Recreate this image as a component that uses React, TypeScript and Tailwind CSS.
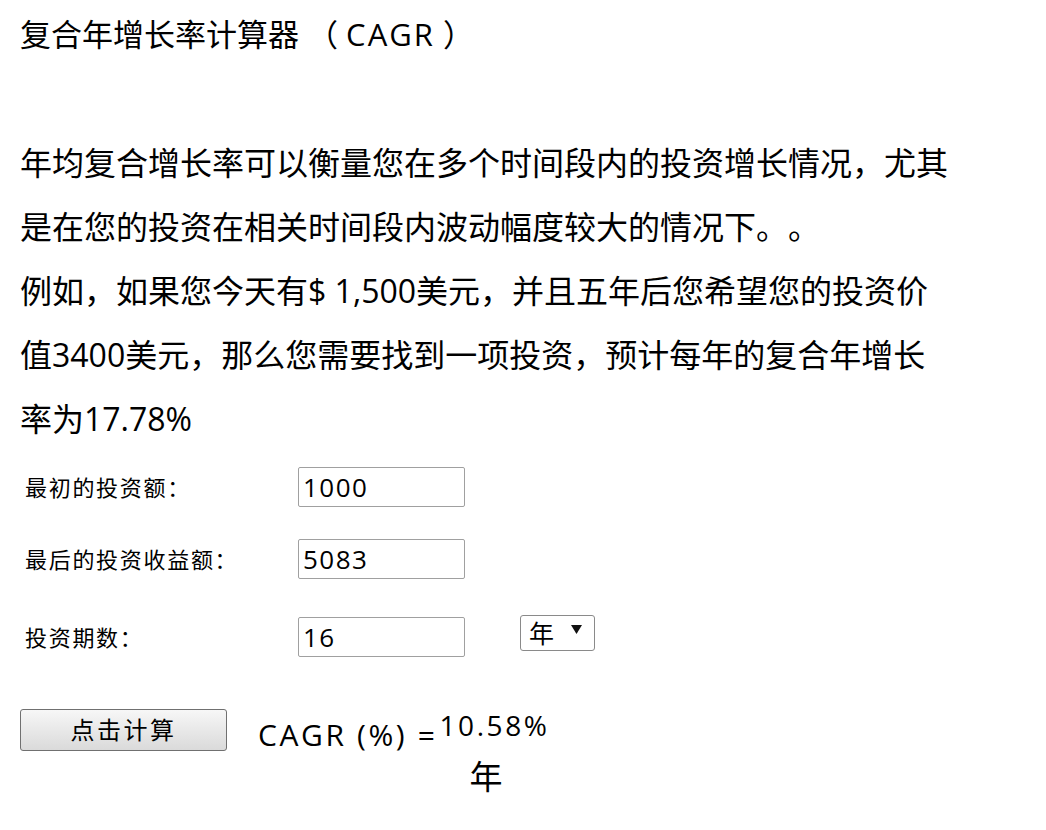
const fields = [
  { label: "最初的投资额：", value: "1000", gap: "mt-4" },
  { label: "最后的投资收益额：", value: "5083", gap: "mt-8" },
];

function Field({ label, value, gap }: { label: string; value: string; gap: string }) {
  return (
    <div className={`flex items-center pl-[5px] ${gap}`}>
      <label className="w-[273px] text-[22px] tracking-[1.7px]">{label}</label>
      <input
        defaultValue={value}
        className="h-[40px] w-[167px] rounded-[2px] border border-[#a0a0a0] bg-white px-[4px] text-[26px] tracking-[1.5px] outline-none"
      />
    </div>
  );
}

export default function App() {
  return (
    <div className="min-h-screen bg-white pl-5 pt-[14px] font-['Open_Sans','Noto_Sans_CJK_SC',sans-serif] text-black [text-spacing-trim:space-all]">
      <h1 className="text-[31px] font-normal leading-[40px]">
        复合年增长率计算器 （ <span className="tracking-[2px]">CAGR</span> ）
      </h1>

      <div className="mt-[77px] w-[932px] text-[32px] leading-[64px]">
        <p>
          年均复合增长率可以衡量您在多个时间段内的投资增长情况，尤其是在您的投资在相关时间段内波动幅度较大的情况下。。
        </p>
        <p>
          例如，如果您今天有$ 1,500美元，并且五年后您希望您的投资价值3400美元，那么您需要找到一项投资，预计每年的复合年增长率为17.78%
        </p>
      </div>

      {fields.map((f) => (
        <Field key={f.label} {...f} />
      ))}

      <div className="mt-[38px] flex items-start pl-[5px]">
        <label className="w-[273px] self-center text-[22px] tracking-[1.7px]">投资期数：</label>
        <input
          defaultValue="16"
          className="h-[40px] w-[167px] rounded-[2px] border border-[#a0a0a0] bg-white px-[4px] text-[26px] tracking-[1.5px] outline-none"
        />
        <div className="ml-[55px] -mt-[2px] flex h-[36px] w-[75px] items-center rounded-[3px] border border-[#8a8a8a] bg-white pl-[8px]">
          <span className="text-[25px] leading-none">年</span>
          <svg className="ml-[17px] mb-[8px]" width="11" height="9" viewBox="0 0 11 9">
            <polygon points="0,0 11,0 5.5,9" fill="#111" />
          </svg>
        </div>
      </div>

      <div className="mt-[42px] flex items-start">
        <button className="mt-[10px] h-[42px] w-[207px] rounded-[3px] border border-[#707070] bg-linear-to-b from-[#f7f7f7] to-[#dadada] text-[24px] tracking-[2.5px]">
          点击计算
        </button>
        <span className="ml-[31px] mt-[16px] text-[30px] leading-[40px] tracking-[2.6px]">CAGR (%) =</span>
        <div className="ml-[2px] text-[28px] leading-[52px]">
          <div className="tracking-[2.6px]">10.58%</div>
          <div className="pl-[30px] text-[33px]">年</div>
        </div>
      </div>
    </div>
  );
}
